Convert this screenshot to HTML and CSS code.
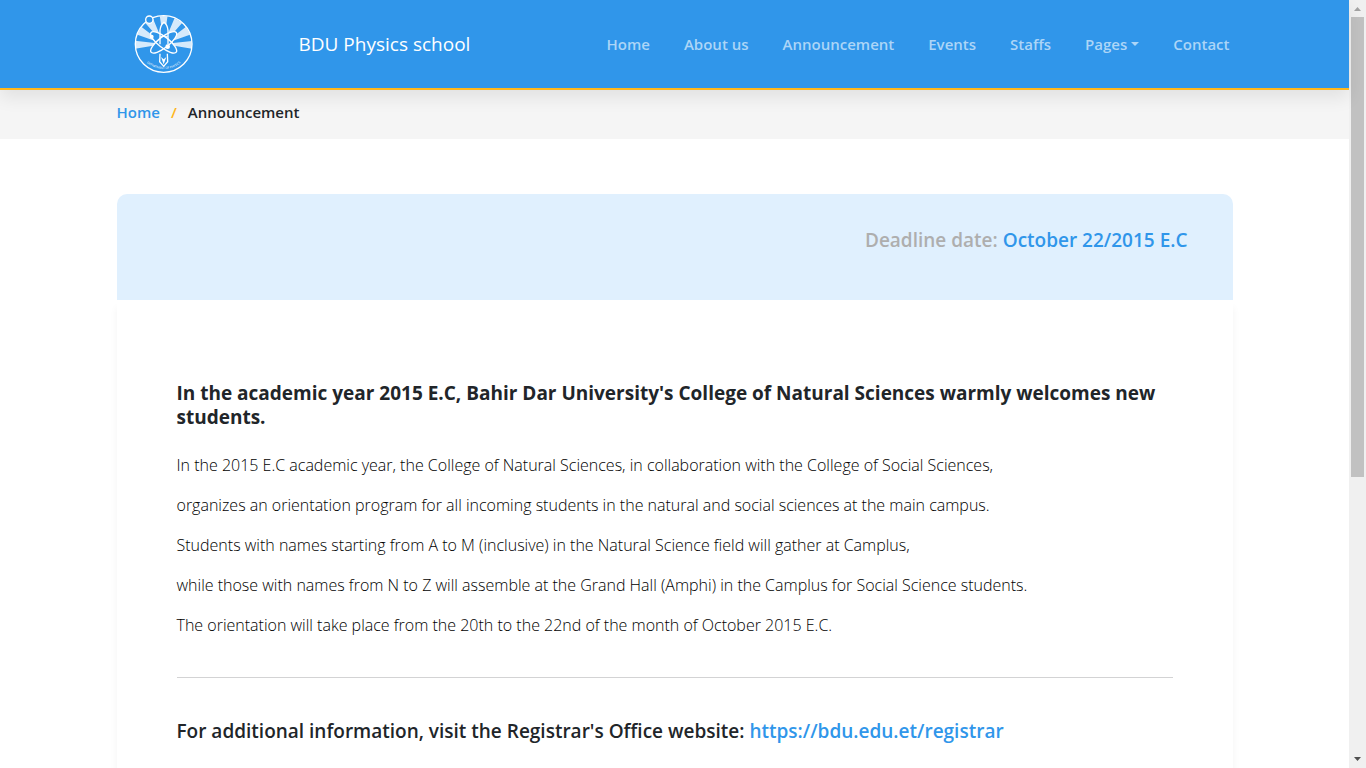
FILE: index.html
```html
<!DOCTYPE html>
<html lang="en">
<head>
<meta charset="utf-8">
<title>Announcement - BDU Physics school</title>
<link rel="stylesheet" href="styles.css">
</head>
<body>
<div class="window">
  <div class="page">
    <header class="header">
      <div class="container header-row">
        <a class="logo" href="#" aria-label="Department of Physics">
          <svg viewBox="42 27 180 180" width="60" height="60" fill="none" stroke="#fff" stroke-width="4">
            <defs><clipPath id="disc"><circle cx="131" cy="117" r="84"/></clipPath></defs>
            <g clip-path="url(#disc)" fill="#d6eafb" stroke="none">
              <path d="M131 117 40 107V132Z M131 117 46 87 60 62Z M131 117 74 52 97 36Z M131 117 119 30H143Z M131 117 165 36 188 52Z M131 117 202 62 216 87Z M131 117 222 107V132Z"/>
            </g>
            <g fill="#3096ea" stroke="none">
              <ellipse cx="131" cy="112" rx="46" ry="17" transform="rotate(38 131 112)"/>
              <ellipse cx="131" cy="112" rx="46" ry="17" transform="rotate(-38 131 112)"/>
              <path d="M100 122H162L150 144H112Z"/>
            </g>
            <circle cx="131" cy="117" r="85"/>
            <circle cx="88" cy="44" r="11" fill="#3096ea"/>
            <path d="M120 118V76Q122 58 132 52 142 58 144 76V118" fill="#3096ea"/>
            <path d="M121 94H143" stroke-width="3"/>
            <ellipse cx="131" cy="112" rx="48" ry="16" transform="rotate(38 131 112)"/>
            <ellipse cx="131" cy="112" rx="48" ry="16" transform="rotate(-38 131 112)"/>
            <circle cx="95" cy="95" r="4" fill="#fff"/>
            <circle cx="143" cy="125" r="5" fill="#fff"/>
            <path d="M120 146 119 170 131 184 143 170 142 146"/>
            <path d="M123 156 131 178 139 156 131 163Z" fill="#fff" stroke="none"/>
            <path id="rim" d="M74 167A77 77 0 0 0 188 167" stroke="none"/>
            <text class="logo-text"><textPath href="#rim" startOffset="50%">DEPARTMENT OF PHYSICS</textPath></text>
          </svg>
        </a>
        <a class="brand" href="#">BDU Physics school</a>
        <nav class="nav">
          <a href="#">Home</a>
          <a href="#">About us</a>
          <a href="#">Announcement</a>
          <a href="#">Events</a>
          <a href="#">Staffs</a>
          <button class="nav-menu" type="button">Pages</button>
          <a href="#">Contact</a>
        </nav>
      </div>
    </header>
    <nav class="crumbs" aria-label="Breadcrumb">
      <div class="container crumbs-row">
        <a href="#">Home</a>
        <span class="slash">/</span>
        <span>Announcement</span>
      </div>
    </nav>
    <main class="container main">
      <div class="deadline">Deadline date: <span class="accent">October 22/2015 E.C</span></div>
      <article class="notice">
        <h1 class="notice-title">In the academic year 2015 E.C, Bahir Dar University's College of Natural Sciences warmly welcomes new students.</h1>
        <p class="notice-text">In the 2015 E.C academic year, the College of Natural Sciences, in collaboration with the College of Social Sciences,<br>organizes an orientation program for all incoming students in the natural and social sciences at the main campus.<br>Students with names starting from A to M (inclusive) in the Natural Science field will gather at Camplus,<br>while those with names from N to Z will assemble at the Grand Hall (Amphi) in the Camplus for Social Science students.<br>The orientation will take place from the 20th to the 22nd of the month of October 2015 E.C.</p>
        <hr class="rule">
        <p class="more">For additional information, visit the Registrar's Office website: <a href="#">https://bdu.edu.et/registrar</a></p>
      </article>
    </main>
  </div>
  <div class="scroll" aria-hidden="true">
    <svg class="scroll-arrow" width="15" height="17" viewBox="0 0 15 17"><path d="M4 11 7.500 7 11 11Z" fill="#a3a3a3"/></svg>
    <div class="scroll-thumb"></div>
    <div class="scroll-rest"></div>
    <svg class="scroll-arrow" width="15" height="17" viewBox="0 0 15 17"><path d="M4 6 7.500 10 11 6Z" fill="#505050"/></svg>
  </div>
</div>
</body>
</html>
```
FILE: styles.css
```css
* { box-sizing: border-box; }
body { margin: 0; font-family: "Open Sans", "Noto Sans", sans-serif; font-size: 15px; line-height: 24px; color: #212529; background: #fff; }
a { color: #3096ea; text-decoration: none; }
.window { display: flex; height: 100vh; overflow: hidden; }
.page { flex: 1; min-width: 0; }
.container { width: 100%; max-width: 1140px; margin: 0 auto; padding: 0 12px; }
.header { position: relative; background: #3096ea; border-bottom: 2px solid #ffb71c; box-shadow: 0 8px 16px rgba(0, 0, 0, .08); }
.header-row { display: flex; align-items: center; height: 88px; padding: 0 15px 0 29px; }
.logo { display: flex; }
.logo-text { font-size: 9px; text-anchor: middle; fill: #fff; stroke: none; }
.brand { margin-left: 105px; font-size: 19px; color: #fff; }
.nav { display: flex; gap: 34px; margin-left: auto; font-weight: 600; }
.nav a, .nav-menu { color: #acd5f7; }
.nav-menu { display: flex; align-items: center; gap: 4px; padding: 0; border: 0; background: none; font: inherit; }
.nav-menu::after { content: ""; border: 4px solid transparent; border-top-color: currentColor; border-bottom: 0; }
.crumbs { background: #f5f5f5; }
.crumbs-row { display: flex; gap: 11px; padding-top: 10px; padding-bottom: 15px; font-weight: 600; }
.slash { color: #ffb71c; }
.main { padding-top: 55px; }
.deadline { height: 106px; padding: 32px 45px; border-radius: 10px 10px 0 0; background: #e0f0fe; font-size: 19px; line-height: 28px; font-weight: 600; text-align: right; color: #aeaeae; }
.accent { color: #3096ea; }
.notice { padding: 81px 60px; box-shadow: 0 8px 8px rgba(0, 0, 0, .05); }
.notice-title { margin: 0 0 16px; font-size: 19px; line-height: 24px; font-weight: 700; }
.notice-text { margin: 0; font-size: 16px; line-height: 40px; font-weight: 300; color: #000; }
.rule { height: 1px; margin: 32px 0 39px; border: 0; background: #d3d3d4; }
.more { margin: 0; font-size: 19px; line-height: 28px; font-weight: 600; }
.scroll { display: flex; flex-direction: column; width: 17px; padding: 0 1px; background: #f0f0f0; }
.scroll-arrow { flex: none; }
.scroll-thumb { flex: 460; margin: 0 1px; background: #c1c1c1; }
.scroll-rest { flex: 274; }
```
